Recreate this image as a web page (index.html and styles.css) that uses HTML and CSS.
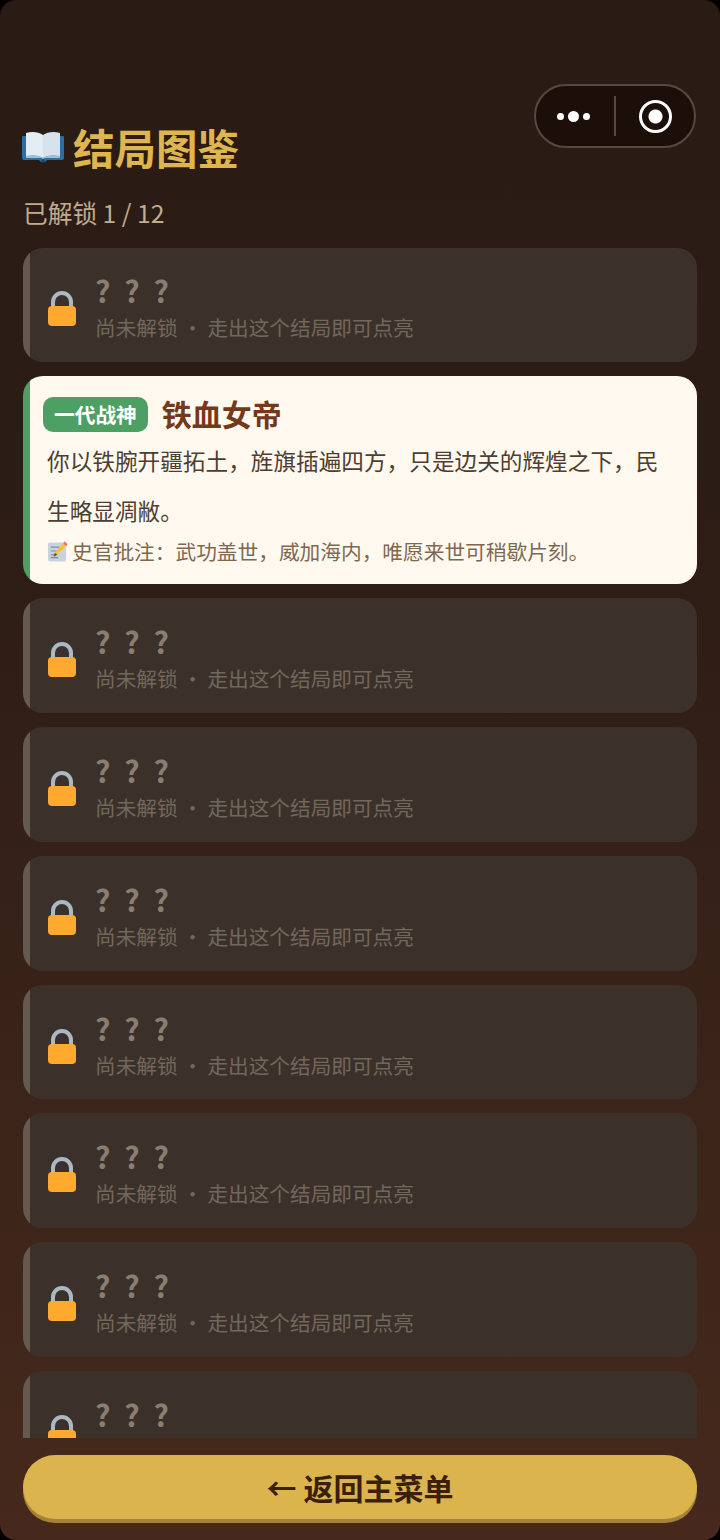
FILE: index.html
```html
<!DOCTYPE html>
<html lang="zh-CN">
<head>
    <meta charset="UTF-8">
    <meta name="viewport" content="width=device-width, initial-scale=1.0">
    <title>结局图鉴</title>
    <link rel="stylesheet" href="styles.css">
</head>
<body>
    <svg class="icon-defs" width="0" height="0">
        <symbol id="lock" viewBox="0 0 28 35">
            <path d="M5 17V11a9 9 0 0 1 18 0v6" fill="none" stroke="#a9bac4" stroke-width="4"/>
            <rect x="0" y="15" width="28" height="20" rx="4" fill="#ffa92e"/>
        </symbol>
    </svg>

    <div class="page">
        <div class="capsule">
            <div class="capsule-more">
                <span class="dot"></span>
                <span class="dot dot-big"></span>
                <span class="dot"></span>
            </div>
            <div class="capsule-line"></div>
            <div class="capsule-close"><span></span></div>
        </div>

        <header class="header">
            <h1 class="title">
                <svg class="title-icon" viewBox="0 0 42 32">
                    <path d="M1 5h40a1 1 0 0 1 1 1v21a2 2 0 0 1-2 2H25l-2 2h-4l-2-2H2a2 2 0 0 1-2-2V6a1 1 0 0 1 1-1z" fill="#2f6d9c"/>
                    <path d="M21 4C17 1 10 0 4 2v23c6-1 13-1 17 2z" fill="#e4edf4"/>
                    <path d="M21 4c4-3 11-4 17-2v23c-6-1-13-1-17 2z" fill="#d6e2ec"/>
                    <path d="M4 25c6-1 13-1 17 2 4-3 11-3 17-2v2H23l-2 1-2-1H4z" fill="#9fc0da"/>
                    <circle cx="21" cy="30" r="1.800" fill="#174a73"/>
                </svg>
                <span>结局图鉴</span>
            </h1>
            <p class="progress">已解锁 1 / 12</p>
        </header>

        <div class="list">
            <div class="card card-locked">
                <svg class="lock"><use href="#lock"/></svg>
                <div class="locked-text">
                    <div class="locked-title">? ? ?</div>
                    <div class="locked-sub">尚未解锁 · 走出这个结局即可点亮</div>
                </div>
            </div>

            <div class="card card-open">
                <div class="open-head">
                    <span class="badge">一代战神</span>
                    <span class="open-title">铁血女帝</span>
                </div>
                <p class="open-desc">你以铁腕开疆拓土，旌旗插遍四方，只是边关的辉煌之下，民生略显凋敝。</p>
                <p class="open-note">
                    <svg class="note-icon" viewBox="0 0 22 22">
                        <rect x="1" y="2" width="19" height="20" rx="2" fill="#c9d3de"/>
                        <path d="M4 7h9M4 11h6M4 15h5M4 18h8" stroke="#7f8fa3" stroke-width="1.2"/>
                        <path d="M7 17l1-4L17 3l3 3-10 9z" fill="#fbc02d"/>
                        <path d="M17 3l1.500-2 3 3-1.500 2z" fill="#e8705f"/>
                        <path d="M7 17l1-4 3 2z" fill="#5a4a3a"/>
                    </svg>史官批注：武功盖世，威加海内，唯愿来世可稍歇片刻。
                </p>
            </div>

            <div class="card card-locked">
                <svg class="lock"><use href="#lock"/></svg>
                <div class="locked-text">
                    <div class="locked-title">? ? ?</div>
                    <div class="locked-sub">尚未解锁 · 走出这个结局即可点亮</div>
                </div>
            </div>
            <div class="card card-locked">
                <svg class="lock"><use href="#lock"/></svg>
                <div class="locked-text">
                    <div class="locked-title">? ? ?</div>
                    <div class="locked-sub">尚未解锁 · 走出这个结局即可点亮</div>
                </div>
            </div>
            <div class="card card-locked">
                <svg class="lock"><use href="#lock"/></svg>
                <div class="locked-text">
                    <div class="locked-title">? ? ?</div>
                    <div class="locked-sub">尚未解锁 · 走出这个结局即可点亮</div>
                </div>
            </div>
            <div class="card card-locked">
                <svg class="lock"><use href="#lock"/></svg>
                <div class="locked-text">
                    <div class="locked-title">? ? ?</div>
                    <div class="locked-sub">尚未解锁 · 走出这个结局即可点亮</div>
                </div>
            </div>
            <div class="card card-locked">
                <svg class="lock"><use href="#lock"/></svg>
                <div class="locked-text">
                    <div class="locked-title">? ? ?</div>
                    <div class="locked-sub">尚未解锁 · 走出这个结局即可点亮</div>
                </div>
            </div>
            <div class="card card-locked">
                <svg class="lock"><use href="#lock"/></svg>
                <div class="locked-text">
                    <div class="locked-title">? ? ?</div>
                    <div class="locked-sub">尚未解锁 · 走出这个结局即可点亮</div>
                </div>
            </div>
            <div class="card card-locked">
                <svg class="lock"><use href="#lock"/></svg>
                <div class="locked-text">
                    <div class="locked-title">? ? ?</div>
                    <div class="locked-sub">尚未解锁 · 走出这个结局即可点亮</div>
                </div>
            </div>
        </div>

        <div class="footer">
            <button class="back-button">← 返回主菜单</button>
        </div>
    </div>
</body>
</html>
```

FILE: styles.css
```css
body {
    margin: 0;
    background: #000;
    font-family: "Noto Sans CJK SC", "Noto Sans", sans-serif;
}

.icon-defs {
    display: block;
}

.page {
    position: relative;
    display: flex;
    flex-direction: column;
    height: 1540px;
    overflow: hidden;
    border-radius: 16px;
    background: linear-gradient(180deg, #2a1c14 0%, #2b1c15 30%, #46291c 100%);
}

.capsule {
    position: absolute;
    top: 84px;
    right: 24px;
    display: flex;
    align-items: center;
    box-sizing: border-box;
    width: 162px;
    height: 64px;
    border: 2px solid #57493f;
    border-radius: 32px;
    background: #1c0f0a;
}

.capsule-more {
    display: flex;
    align-items: center;
    justify-content: center;
    gap: 4px;
    box-sizing: border-box;
    width: 78px;
    padding-right: 3px;
}

.dot {
    width: 7px;
    height: 7px;
    border-radius: 50%;
    background: #fff;
}

.dot-big {
    width: 11px;
    height: 11px;
}

.capsule-line {
    width: 2px;
    height: 40px;
    background: #57493f;
}

.capsule-close {
    display: flex;
    align-items: center;
    justify-content: center;
    flex: 1;
}

.capsule-close span {
    box-sizing: border-box;
    width: 33px;
    height: 33px;
    border: 3px solid #fff;
    border-radius: 50%;
    background: radial-gradient(circle, #fff 0, #fff 6.500px, transparent 7.500px);
}

.header {
    padding: 117px 22px 0;
}

.title {
    display: flex;
    align-items: center;
    gap: 9px;
    margin: 0;
    color: #dfb54f;
    font-size: 41.500px;
    line-height: 60px;
    font-weight: 700;
}

.title-icon {
    width: 42px;
    height: 32px;
}

.progress {
    margin: 17px 0 17.500px 1px;
    color: #c3ac8e;
    font-size: 24.700px;
    line-height: 36px;
}

.list {
    display: flex;
    flex-direction: column;
    flex: 1;
    gap: 14px;
    min-height: 0;
    overflow: hidden;
    margin: 0 23px;
}

.card {
    flex-shrink: 0;
    box-sizing: border-box;
    border-radius: 20px;
}

.card-locked {
    display: flex;
    align-items: center;
    gap: 19px;
    height: 114.800px;
    padding: 0 18px 0 25px;
    background: linear-gradient(90deg, #66594f 7px, #3c312a 7px);
}

.lock {
    flex-shrink: 0;
    width: 28px;
    height: 35px;
    margin-top: 8px;
}

.locked-text {
    min-width: 0;
    margin-top: 3px;
}

.locked-title {
    color: #8a7e72;
    font-size: 30px;
    line-height: 40px;
    font-weight: 700;
    letter-spacing: 3.500px;
}

.locked-sub {
    margin-top: 2px;
    color: #72675d;
    font-size: 20.650px;
    line-height: 30px;
}

.card-open {
    padding: 18px 13px 18px 20px;
    background: linear-gradient(90deg, #4e9f63 7px, #fff9ef 7px);
}

.open-head {
    display: flex;
    align-items: center;
    gap: 14px;
}

.badge {
    padding: 0 11px;
    border-radius: 10px;
    background: #4e9f63;
    color: #fff;
    font-size: 20.700px;
    line-height: 35px;
    font-weight: 700;
}

.open-title {
    position: relative;
    top: -1px;
    color: #74381a;
    font-size: 30px;
    line-height: 40px;
    font-weight: 700;
}

.open-desc {
    margin: 2px 4px 0;
    color: #4e3d30;
    font-size: 22.650px;
    line-height: 50px;
}

.open-note {
    display: flex;
    align-items: center;
    gap: 4px;
    margin: 0 4px;
    color: #80684f;
    font-size: 20.700px;
    line-height: 30px;
}

.note-icon {
    width: 21px;
    height: 22px;
}

.footer {
    padding: 17px 23px;
}

.back-button {
    display: block;
    width: 100%;
    height: 64px;
    margin-bottom: 4px;
    border: 0;
    border-radius: 32px;
    background: #dbb44e;
    box-shadow: 0 4px 0 #a5823a;
    color: #3a1f0b;
    font-family: inherit;
    font-size: 30px;
    font-weight: 700;
}
```
